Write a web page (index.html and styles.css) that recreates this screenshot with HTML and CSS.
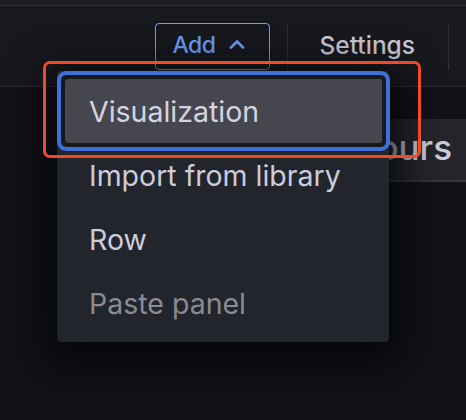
FILE: index.html
```html
<!DOCTYPE html>
<html>
<head>
<meta charset="utf-8">
<link rel="stylesheet" href="styles.css">
</head>
<body>
<div class="page-top"></div>
<header class="toolbar">
  <button class="add-btn">Add
    <svg class="chev" width="16" height="10" viewBox="0 0 16 10"><path d="M2 8.5 L8 2.5 L14 8.5" fill="none" stroke="currentColor" stroke-width="2.6" stroke-linecap="round" stroke-linejoin="round"/></svg>
  </button>
  <span class="sep"></span>
  <button class="text-btn">Settings</button>
  <span class="sep"></span>
</header>
<main class="content">
  <div class="controls">
    <button class="time-btn"><span class="time-label">hours</span></button>
  </div>
</main>

<div class="menu">
  <div class="item active">Visualization</div>
  <div class="item">Import from library</div>
  <div class="item">Row</div>
  <div class="item disabled">Paste panel</div>
</div>
<div class="focus-ring"></div>
<div class="annotation"></div>
</body>
</html>
```

FILE: styles.css
```css
* { box-sizing: border-box; }
html, body { margin: 0; height: 100%; }
body {
  background: #111217;
  font-family: Inter, "Noto Sans", sans-serif;
  overflow: hidden;
  position: relative;
}
button { font-family: inherit; cursor: pointer; }

.page-top {
  height: 6px;
  background: #1b1c20;
  border-bottom: 1px solid #2c2e33;
}
.toolbar {
  height: 81px;
  background: #18191d;
  border-bottom: 1px solid #2c2e33;
  display: flex;
  align-items: center;
  justify-content: flex-end;
  padding-right: 17px;
}
.add-btn {
  width: 115px;
  height: 47px;
  background: transparent;
  border: 1.5px solid #6e9fff;
  border-radius: 4px;
  color: #6e9fff;
  font-size: 23px;
  font-weight: 500;
  letter-spacing: -0.5px;
  display: flex;
  align-items: center;
  justify-content: center;
  gap: 13px;
  padding: 0 7px 2px 0;
  margin-right: 17px;
}
.chev { margin-top: -2px; }
.sep {
  width: 1px;
  height: 47px;
  background: #2f3137;
}
.text-btn {
  background: transparent;
  border: 0;
  color: #ccccdc;
  font-size: 24.5px;
  font-weight: 500;
  padding: 0 33px 2px 32px;
}
.content { padding-top: 32px; }
.controls {
  display: flex;
  justify-content: flex-end;
  margin-right: -6px;
}
.time-btn {
  height: 63px;
  width: 300px;
  background: #25262c;
  border: 0;
  border-bottom: 2px solid #34363c;
  color: #ccccdc;
  font-size: 35px;
  font-weight: 500;
  display: flex;
  align-items: center;
  justify-content: flex-end;
  white-space: nowrap;
  padding: 0 20px 5px 0;
}

.menu {
  position: absolute;
  left: 57px;
  top: 71px;
  width: 332px;
  height: 271px;
  background: #22252b;
  border-radius: 4px;
  padding: 8px 6px 8px 8px;
  box-shadow: 0 10px 40px 12px rgba(4, 5, 8, 0.85);
}
.item {
  height: 64px;
  display: flex;
  align-items: center;
  padding: 0 24px;
  font-size: 28.5px;
  color: #ccccdc;
  border-radius: 4px;
}
.item.active {
  background: #46464f;
  color: #d4d4e0;
}
.item.disabled { color: #8a8a95; }

.focus-ring {
  position: absolute;
  left: 57px;
  top: 71px;
  width: 333px;
  height: 80px;
  border: 4px solid #3d71d9;
  border-radius: 9px;
  box-shadow: inset 0 0 0 4px #18191d;
}
.annotation {
  position: absolute;
  left: 43px;
  top: 61px;
  width: 378px;
  height: 97px;
  border: 3px solid #f24a26;
  border-radius: 7px;
}
```
